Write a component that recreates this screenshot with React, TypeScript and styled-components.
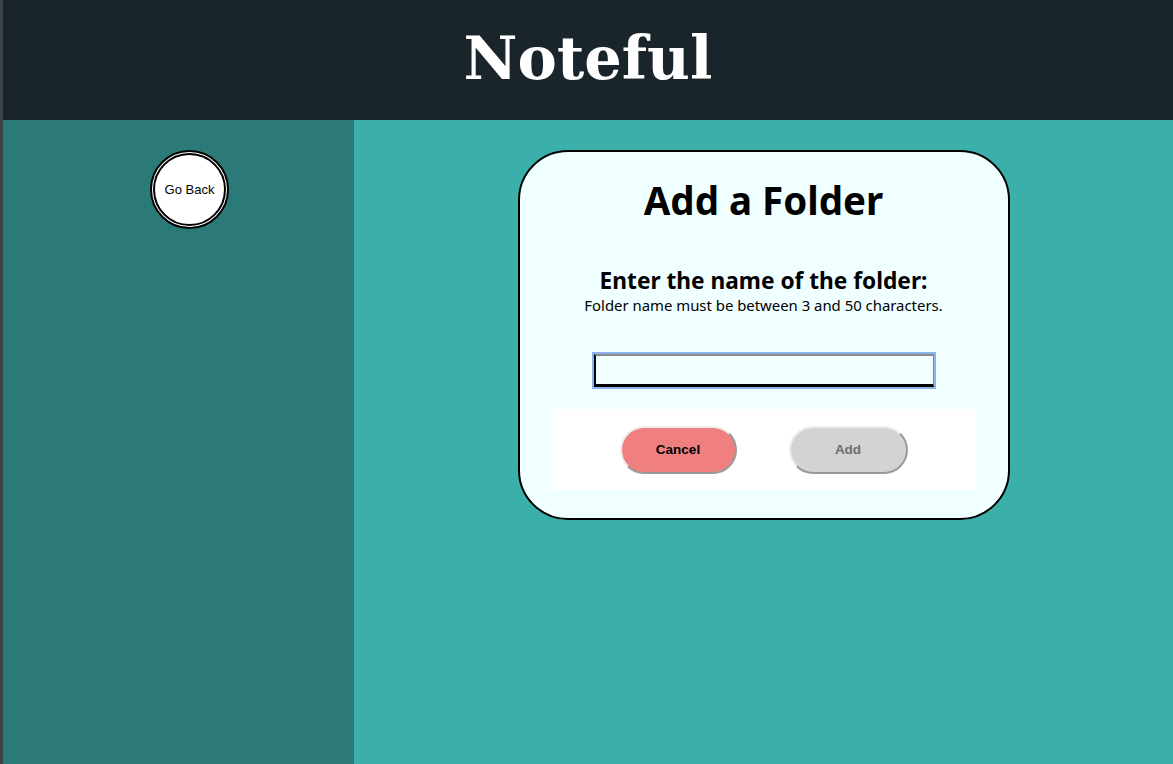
import React from "react";
import styled, { createGlobalStyle } from "styled-components";

const Global = createGlobalStyle`
  html, body { margin: 0; padding: 0; }
  body { background: #3d4349; font-family: "Liberation Sans", Arial, sans-serif; }
  #root { min-height: 764px; }
`;

const Page = styled.div`
  margin-left: 3px;
  min-height: 764px;
  display: flex;
  flex-direction: column;
  background: #3bafa9;
`;

const Header = styled.header`
  height: 120px;
  background: #19242b;
  display: flex;
  align-items: center;
  justify-content: center;
`;

const Logo = styled.h1`
  margin: 0;
  font-family: "DejaVu Serif", Georgia, serif;
  font-weight: bold;
  font-size: 59px;
  color: #ffffff;
  transform: translateY(-2px);
`;

const Body = styled.div`
  flex: 1;
  display: grid;
  grid-template-columns: 351px 1fr;
  min-height: 644px;
`;

const Sidebar = styled.nav`
  background: #2c7a77;
  padding: 30px 0 0 147px;
`;

const BackButton = styled.button`
  width: 79px;
  height: 79px;
  border-radius: 50%;
  border: 5px double #000;
  background: #fff;
  font-family: "Liberation Sans", Arial, sans-serif;
  font-size: 13px;
  color: #000;
  padding: 0;
  cursor: pointer;
`;

const Main = styled.main`
  display: flex;
  justify-content: center;
  align-items: flex-start;
  padding-top: 30px;
`;

const Card = styled.form`
  width: 492px;
  box-sizing: border-box;
  border: 2px solid #000;
  border-radius: 50px;
  background: #f0ffff;
  padding: 23px 32px 28px;
  display: flex;
  flex-direction: column;
  align-items: center;
  font-family: "Noto Sans", "Open Sans", sans-serif;
  color: #000;
`;

const Title = styled.h2`
  margin: 0;
  font-size: 38.5px;
  font-weight: bold;
  line-height: 50px;
`;

const Label = styled.label`
  margin-top: 42px;
  font-size: 22.7px;
  font-weight: bold;
  line-height: 28px;
`;

const Hint = styled.p`
  margin: 0;
  font-size: 14.9px;
  line-height: 20px;
`;

const NameInput = styled.input`
  margin-top: 39px;
  width: 340px;
  height: 33px;
  box-sizing: border-box;
  background: #f0ffff;
  border-style: solid;
  border-width: 2px 1px 3px 2px;
  border-color: #8a8a8a #8a8a8a #000 #000;
  outline: 2px solid #8eb2ec;
  outline-offset: 0;
  font-size: 15px;
  padding: 0 4px;
`;

const ButtonBar = styled.div`
  margin-top: 22px;
  align-self: stretch;
  height: 81px;
  background: #ffffff;
  display: flex;
  align-items: center;
  justify-content: center;
  gap: 52px;
`;

const Action = styled.button<{ $tone: "cancel" | "add" }>`
  width: ${(p) => (p.$tone === "cancel" ? "117px" : "119px")};
  height: 48px;
  border-radius: 24px;
  border-width: 2px;
  border-style: solid;
  border-color: #eeeeee #9a9a9a #9a9a9a #eeeeee;
  background: ${(p) => (p.$tone === "cancel" ? "#f08080" : "#d3d3d3")};
  color: ${(p) => (p.$tone === "cancel" ? "#000" : "#6d6d6d")};
  font-family: "Liberation Sans", Arial, sans-serif;
  font-weight: bold;
  font-size: 13.5px;
  cursor: pointer;
`;

export default function App() {
  return (
    <>
      <Global />
      <Page>
        <Header>
          <Logo>Noteful</Logo>
        </Header>
        <Body>
          <Sidebar>
            <BackButton type="button">Go Back</BackButton>
          </Sidebar>
          <Main>
            <Card onSubmit={(e) => e.preventDefault()}>
              <Title>Add a Folder</Title>
              <Label htmlFor="folder-name">Enter the name of the folder:</Label>
              <Hint>Folder name must be between 3 and 50 characters.</Hint>
              <NameInput id="folder-name" type="text" />
              <ButtonBar>
                <Action type="button" $tone="cancel">Cancel</Action>
                <Action type="submit" $tone="add" disabled>Add</Action>
              </ButtonBar>
            </Card>
          </Main>
        </Body>
      </Page>
    </>
  );
}
